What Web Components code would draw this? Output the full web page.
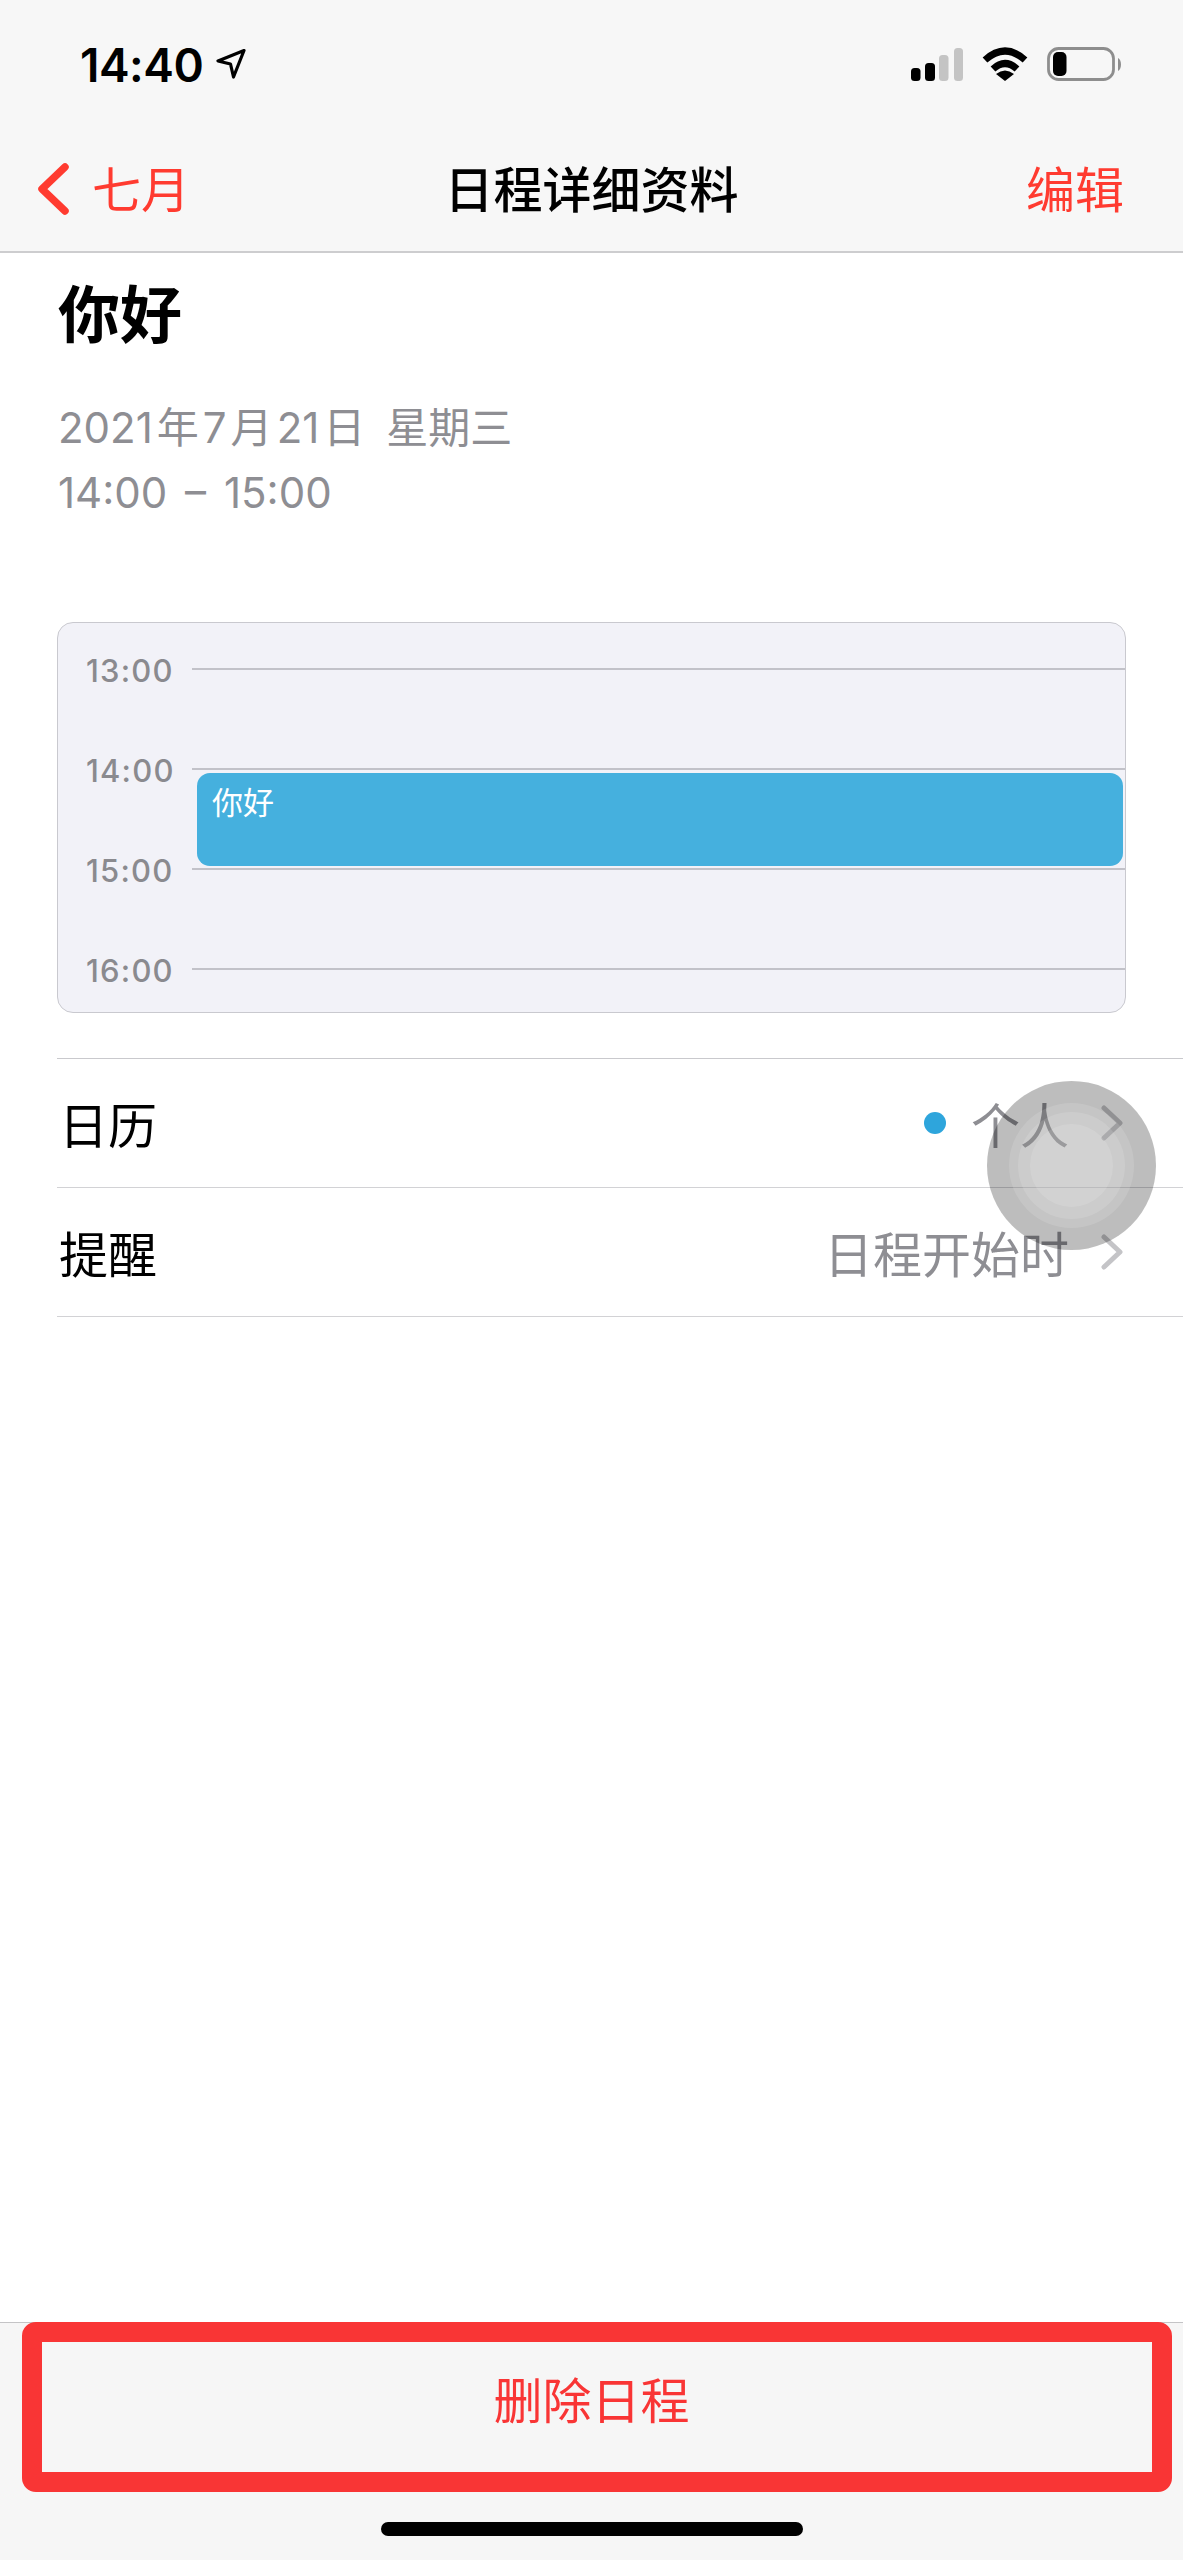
<!DOCTYPE html>
<html lang="zh">
<head>
<meta charset="utf-8">
<title>日程详细资料</title>
<style>
  html, body { margin: 0; padding: 0; background: #fff; }
  body {
    width: 1183px;
    height: 2560px;
    overflow: hidden;
    font-family: Inter, "Noto Sans CJK SC", sans-serif;
  }
</style>
</head>
<body>
<app-shell>
  <status-bar></status-bar>
  <nav-bar back="七月" action="编辑">日程详细资料</nav-bar>
  <event-header title="你好" date="2021年7月21日 星期三" time="14:00 – 15:00"></event-header>
  <day-preview event="你好"></day-preview>
  <detail-row first label="日历" value="个人" dot></detail-row>
  <detail-row label="提醒" value="日程开始时"></detail-row>
  <delete-bar>删除日程</delete-bar>
  <assistive-touch></assistive-touch>
</app-shell>

<script>
class AppShell extends HTMLElement {
    constructor() {
        super();
        this.attachShadow({ mode: 'open' });
        this.shadowRoot.innerHTML = `
            <style>
                :host {
                    display: flex;
                    flex-direction: column;
                    position: relative;
                    width: 1183px;
                    height: 2560px;
                    background: #fff;
                    overflow: hidden;
                }
            </style>
            <slot></slot>
        `;
    }
}

class StatusBar extends HTMLElement {
    constructor() {
        super();
        this.attachShadow({ mode: 'open' });
        this.shadowRoot.innerHTML = `
            <style>
                :host {
                    display: flex;
                    align-items: flex-start;
                    height: 132px;
                    box-sizing: border-box;
                    padding: 47px 60px 0 80px;
                    background: #f7f7f7;
                }
                .time {
                    font: 600 46px/36px Inter, sans-serif;
                    color: #000;
                    letter-spacing: -0.5px;
                }
                .arrow { margin: 1px 0 0 13px; }
                .icons {
                    display: flex;
                    align-items: flex-start;
                    margin-left: auto;
                }
                .signal { margin-top: 1px; }
                .wifi { margin-left: 19px; }
                .battery { margin-left: 19px; }
            </style>
            <span class="time">14:40</span>
            <svg class="arrow" width="30" height="32" viewBox="0 0 30 32">
                <path d="M28 2.5 L2 13 L14.5 16 L17.5 29 Z" fill="none" stroke="#000" stroke-width="3.2" stroke-linejoin="round"/>
            </svg>
            <div class="icons">
                <svg class="signal" width="52" height="34" viewBox="0 0 52 34">
                    <rect x="0" y="20" width="9.5" height="13" rx="3.5" fill="#000"/>
                    <rect x="14" y="15" width="10" height="18" rx="3.5" fill="#000"/>
                    <rect x="28" y="7" width="9.5" height="26" rx="3.5" fill="#c4c4c4"/>
                    <rect x="43" y="0" width="9" height="33" rx="3.5" fill="#c4c4c4"/>
                </svg>
                <svg class="wifi" width="46" height="35" viewBox="0 0 46 35">
                    <path d="M3 13 Q23 -5 43 13" fill="none" stroke="#000" stroke-width="7"/>
                    <path d="M11 22 Q23 11 35 22" fill="none" stroke="#000" stroke-width="7"/>
                    <path d="M23 34 L14 27 Q23 20 32 27 Z" fill="#000"/>
                </svg>
                <svg class="battery" width="76" height="35" viewBox="0 0 76 35">
                    <rect x="1.5" y="1.5" width="65" height="31" rx="10" fill="none" stroke="#8e8e8e" stroke-width="2.8"/>
                    <rect x="6" y="5" width="13.5" height="24" rx="5" fill="#000"/>
                    <path d="M71 11 C75 13 75 22 71 24 Z" fill="#8e8e8e"/>
                </svg>
            </div>
        `;
    }
}

class NavBar extends HTMLElement {
    constructor() {
        super();
        this.attachShadow({ mode: 'open' });
        this.shadowRoot.innerHTML = `
            <style>
                :host {
                    display: grid;
                    grid-template-columns: 1fr auto 1fr;
                    align-items: center;
                    height: 121px;
                    box-sizing: border-box;
                    padding: 0 59px 10px 37px;
                    background: #f7f7f7;
                    border-bottom: 2px solid #cdcdcf;
                    font: 49px/60px "Noto Sans CJK SC", sans-serif;
                }
                .back {
                    display: flex;
                    align-items: center;
                    gap: 22px;
                    color: #ff3b30;
                }
                .back svg { margin-top: 4px; }
                .title {
                    color: #000;
                    font-weight: 500;
                    transform: translateX(11px);
                }
                .action { color: #ff3b30; text-align: right; }
            </style>
            <div class="back">
                <svg width="33" height="54" viewBox="0 0 33 54">
                    <path d="M28 5 L5 27 L28 49" fill="none" stroke="#ff3b30" stroke-width="7.5" stroke-linecap="round" stroke-linejoin="round"/>
                </svg>
                <span>${this.getAttribute('back')}</span>
            </div>
            <div class="title"><slot></slot></div>
            <div class="action">${this.getAttribute('action')}</div>
        `;
    }
}

class EventHeader extends HTMLElement {
    constructor() {
        super();
        this.attachShadow({ mode: 'open' });
        // iOS puts a small gap between digits and CJK, so wrap the digits
        const date = this.getAttribute('date').replace(/\d+/g, n => `<span class="n">${n}</span>`);
        this.shadowRoot.innerHTML = `
            <style>
                :host {
                    display: block;
                    height: 369px;
                    box-sizing: border-box;
                    padding: 20px 58px 0;
                }
                h1 {
                    margin: 0 0 46px;
                    font: 700 62px/76px "Noto Sans CJK SC", sans-serif;
                    color: #000;
                }
                p {
                    margin: 0;
                    font: 42px/65px Inter, "Noto Sans CJK SC", sans-serif;
                    color: #8e8e93;
                    white-space: pre;
                }
                .date { word-spacing: 9px; }
                .n { margin: 0 4px; }
                .n:first-child { margin-left: 0; }
                .time { word-spacing: 6px; }
            </style>
            <h1>${this.getAttribute('title')}</h1>
            <p class="date">${date}</p>
            <p class="time">${this.getAttribute('time')}</p>
        `;
    }
}

class DayPreview extends HTMLElement {
    constructor() {
        super();
        this.attachShadow({ mode: 'open' });
        const hours = ['13:00', '14:00', '15:00', '16:00'];
        this.shadowRoot.innerHTML = `
            <style>
                :host {
                    display: flex;
                    flex-direction: column;
                    gap: 70px;
                    position: relative;
                    height: 391px;
                    box-sizing: border-box;
                    margin: 0 57px;
                    padding: 31px 0 29px 28px;
                    background: #f2f2f8;
                    border: 1.5px solid #c9c9cf;
                    border-radius: 16px;
                }
                .hour {
                    display: flex;
                    align-items: center;
                    gap: 18px;
                    height: 30px;
                }
                .hour span {
                    width: 88px;
                    padding-top: 4px;
                    font: 500 31px/30px Inter, sans-serif;
                    letter-spacing: 1.2px;
                    color: #8a8a8f;
                    white-space: nowrap;
                }
                .hour i {
                    flex: 1;
                    height: 2px;
                    background: #c2c2c9;
                }
                .event {
                    position: absolute;
                    left: 139px;
                    right: 2px;
                    top: 150px;
                    height: 93px;
                    box-sizing: border-box;
                    padding: 6px 15px;
                    background: #45b0de;
                    border-radius: 13px;
                    color: #fff;
                    font: 31px/44px "Noto Sans CJK SC", sans-serif;
                }
            </style>
            ${hours.map(h => `<div class="hour"><span>${h}</span><i></i></div>`).join('')}
            <div class="event">${this.getAttribute('event')}</div>
        `;
    }
}

class DetailRow extends HTMLElement {
    constructor() {
        super();
        this.attachShadow({ mode: 'open' });
        const dot = this.hasAttribute('dot') ? '<span class="dot"></span>' : '';
        this.shadowRoot.innerHTML = `
            <style>
                :host {
                    display: flex;
                    align-items: center;
                    height: 128.5px;
                    box-sizing: border-box;
                    margin-left: 57px;
                    padding: 0 60px 0 2px;
                    border-bottom: 1.5px solid #d2d2d5;
                    font: 49px/60px "Noto Sans CJK SC", sans-serif;
                    color: #000;
                }
                :host([first]) {
                    margin-top: 45px;
                    height: 130px;
                    border-top: 1.5px solid #c9c9cd;
                }
                .value {
                    display: flex;
                    align-items: center;
                    margin-left: auto;
                    color: #8e8e93;
                }
                .dot {
                    width: 22px;
                    height: 22px;
                    margin-right: 25px;
                    border-radius: 50%;
                    background: #2ea5dc;
                }
                svg { margin-left: 32px; }
            </style>
            <span>${this.getAttribute('label')}</span>
            <div class="value">
                ${dot}<span>${this.getAttribute('value')}</span>
                <svg width="22" height="36" viewBox="0 0 22 36">
                    <path d="M3 3 L19 18 L3 33" fill="none" stroke="#c4c4c7" stroke-width="5" stroke-linecap="round" stroke-linejoin="round"/>
                </svg>
            </div>
        `;
    }
}

class DeleteBar extends HTMLElement {
    constructor() {
        super();
        this.attachShadow({ mode: 'open' });
        this.shadowRoot.innerHTML = `
            <style>
                :host {
                    display: flex;
                    flex-direction: column;
                    align-items: center;
                    position: relative;
                    height: 238px;
                    box-sizing: border-box;
                    margin-top: auto;
                    background: #f6f6f6;
                    border-top: 1.5px solid #c4c4c6;
                }
                .label {
                    margin-top: 45px;
                    font: 49px/60px "Noto Sans CJK SC", sans-serif;
                    color: #f93535;
                }
                .home {
                    width: 422px;
                    height: 14px;
                    margin-top: 94px;
                    border-radius: 7px;
                    background: #000;
                }
                /* red annotation frame drawn over the button */
                .frame {
                    position: absolute;
                    left: 22px;
                    right: 11px;
                    top: -1px;
                    height: 170px;
                    box-sizing: border-box;
                    border: 20px solid #f93535;
                    border-radius: 14px;
                }
            </style>
            <div class="label"><slot></slot></div>
            <div class="home"></div>
            <div class="frame"></div>
        `;
    }
}

class AssistiveTouch extends HTMLElement {
    constructor() {
        super();
        this.attachShadow({ mode: 'open' });
        this.shadowRoot.innerHTML = `
            <style>
                :host {
                    display: grid;
                    place-items: center;
                    position: absolute;
                    left: 987px;
                    top: 1081px;
                    width: 169px;
                    height: 169px;
                    border-radius: 50%;
                    background: rgba(0, 0, 0, 0.26);
                }
                div {
                    display: grid;
                    place-items: center;
                    border-radius: 50%;
                    background: rgba(255, 255, 255, 0.13);
                }
                .a { width: 125px; height: 125px; }
                .b { width: 107px; height: 107px; }
                .c { width: 83px; height: 83px; }
            </style>
            <div class="a"><div class="b"><div class="c"></div></div></div>
        `;
    }
}

customElements.define('app-shell', AppShell);
customElements.define('status-bar', StatusBar);
customElements.define('nav-bar', NavBar);
customElements.define('event-header', EventHeader);
customElements.define('day-preview', DayPreview);
customElements.define('detail-row', DetailRow);
customElements.define('delete-bar', DeleteBar);
customElements.define('assistive-touch', AssistiveTouch);
</script>
</body>
</html>
